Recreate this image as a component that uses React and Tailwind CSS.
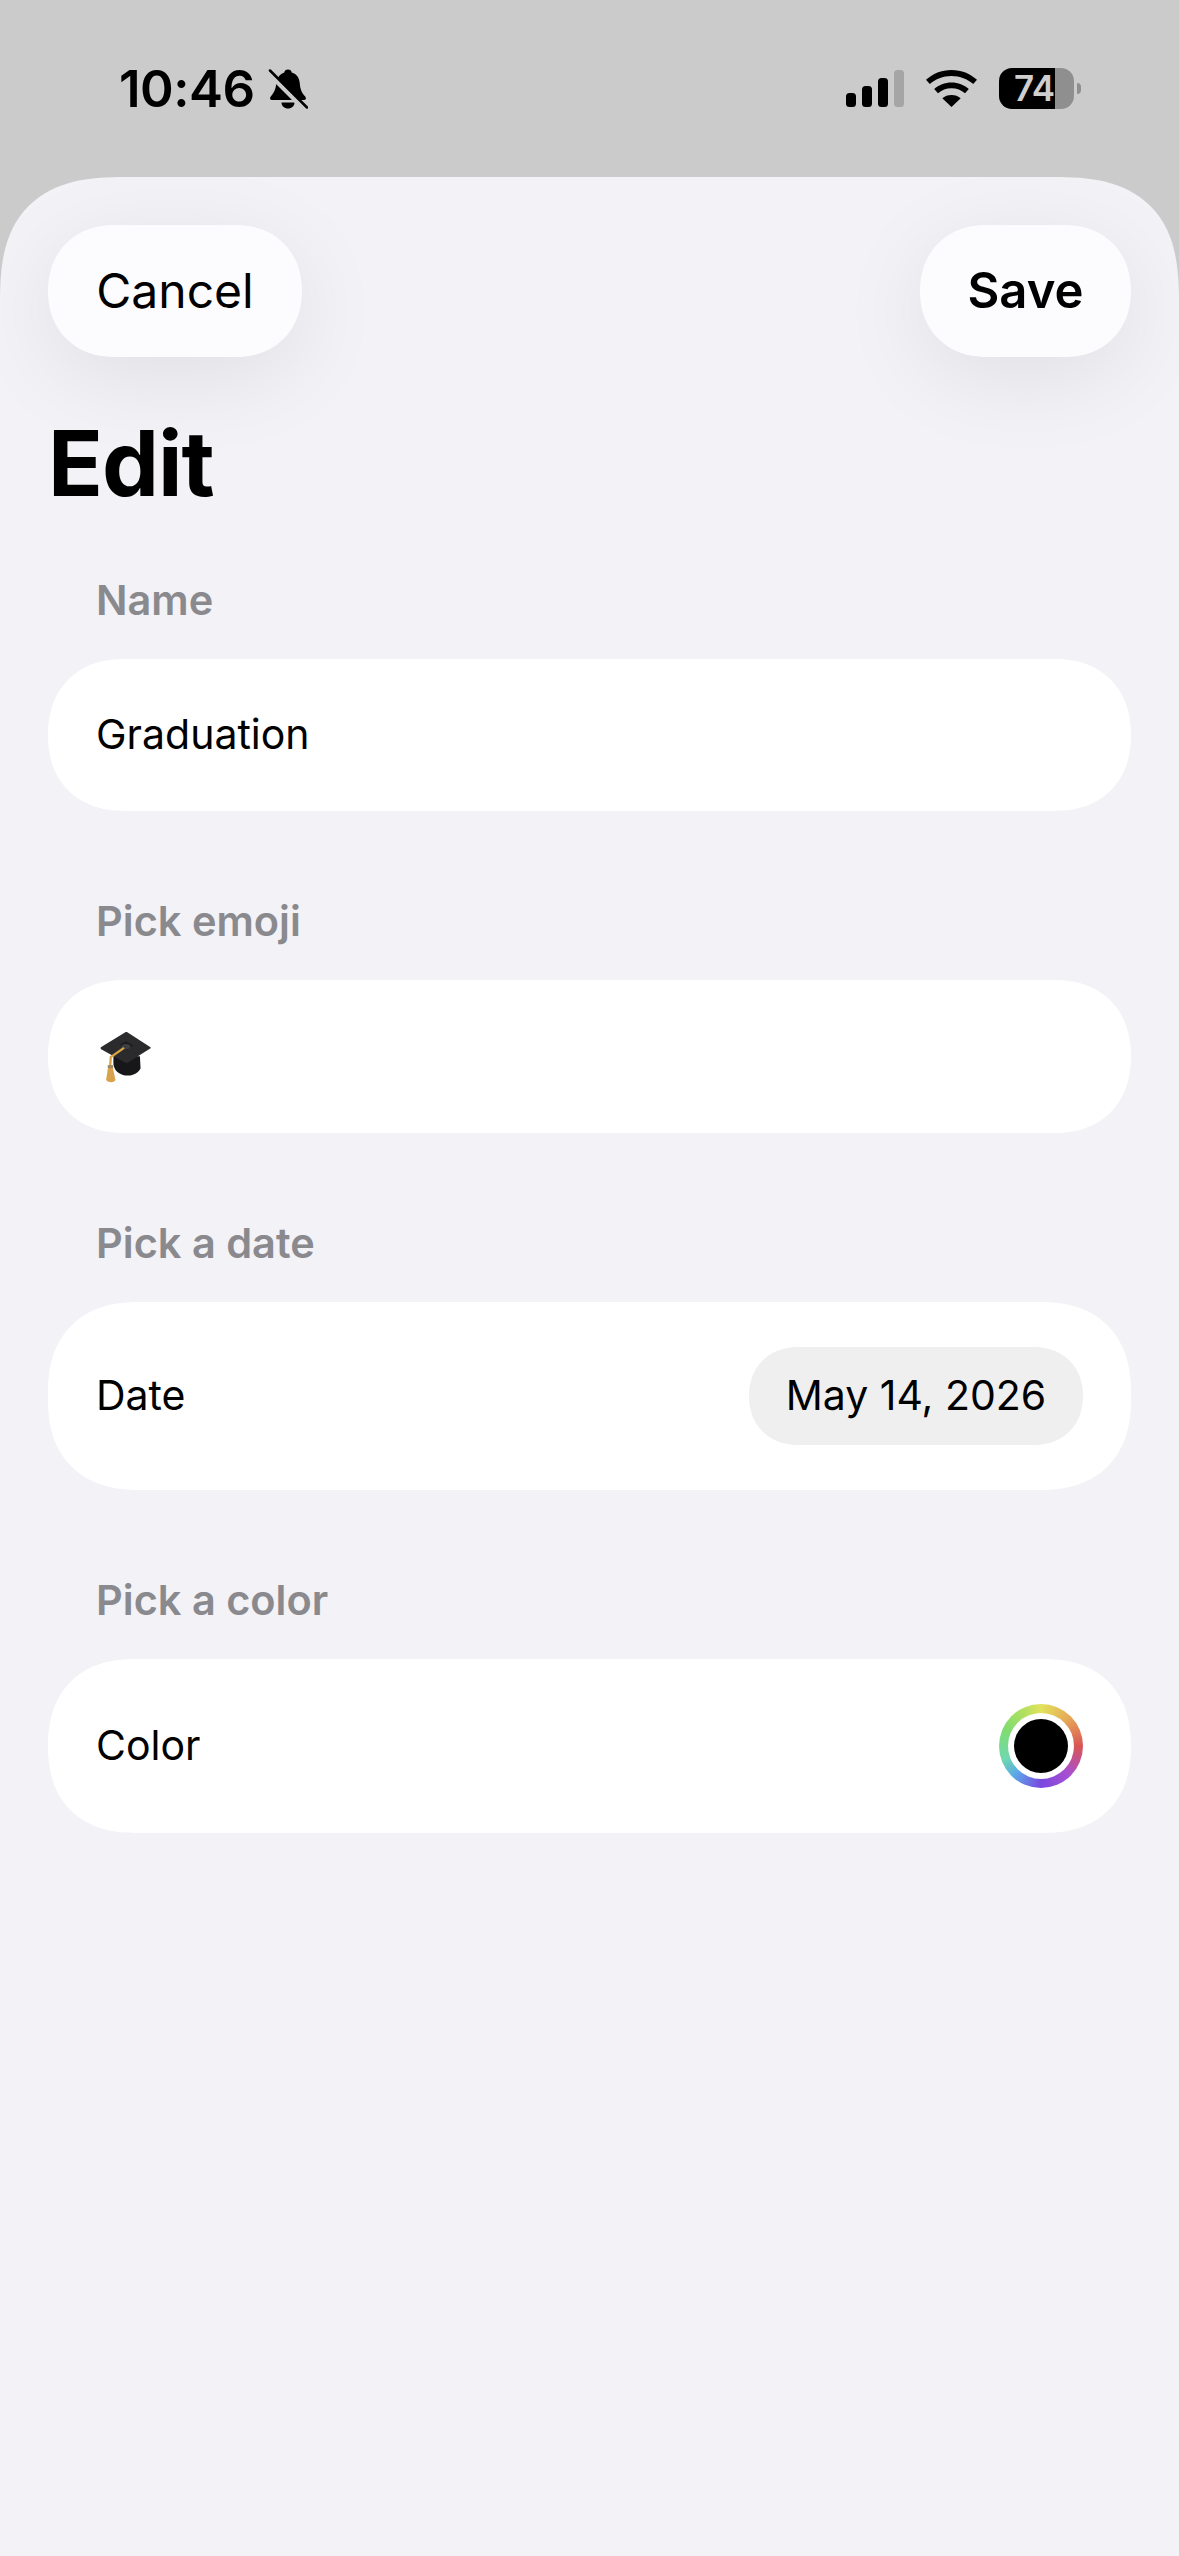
import React from 'react'

const font = "font-['Inter','Liberation_Sans',sans-serif]"

const MutedBell = () => (
  <svg width="40" height="40" viewBox="0 0 40 40">
    <path
      d="M20 0.500c2.200 0 3.400 1.300 3.700 2.900 5.200 1.400 7.700 5.800 8.100 11 .4 5.300 1.600 8.800 5.400 13 1.500 1.700.6 3.600-1.700 3.600H4.500c-2.300 0-3.200-1.900-1.700-3.600 3.500-3.900 4.700-7.300 5.400-12.200.8-5.600 3.200-10.400 8.100-11.800C16.600 1.800 17.800.500 20 .500z"
      fill="#000"
    />
    <path d="M13.500 33.500h13c0 3.500-2.800 6-6.500 6s-6.500-2.500-6.500-6z" fill="#000" />
    <path d="M0 3.500 36.500 40" stroke="#cbcbcb" strokeWidth="5" />
    <path d="M2 1.500 39 38.500" stroke="#000" strokeWidth="2.500" strokeLinecap="round" />
  </svg>
)

const Signal = () => (
  <svg width="58" height="37" viewBox="0 0 58 37">
    <rect x="0" y="23" width="10" height="14" rx="3.500" fill="#000" />
    <rect x="16" y="16" width="10" height="21" rx="3.500" fill="#000" />
    <rect x="32" y="8" width="10" height="29" rx="3.500" fill="#000" />
    <rect x="48" y="0" width="10" height="37" rx="3.500" fill="#a5a5a5" />
  </svg>
)

const Wifi = () => (
  <svg width="51" height="37" viewBox="0 0 51 37">
    <path d="M25.500 0C35.500 0 44.300 3.700 51 9.800l-3.800 4.300C41.500 9 34 6 25.500 6S9.500 9 3.800 14.100L0 9.800C6.700 3.700 15.500 0 25.500 0z" fill="#000" />
    <path d="M25.500 12.500c6.700 0 12.700 2.400 17.300 6.500l-3.800 4.300c-3.600-3.100-8.300-5-13.500-5s-9.900 1.900-13.500 5L8.200 19c4.600-4.100 10.600-6.500 17.300-6.500z" fill="#000" />
    <path d="M25.500 25c3.600 0 6.800 1.200 9.200 3.300L25.500 37l-9.200-8.700c2.400-2.100 5.600-3.300 9.200-3.300z" fill="#000" />
  </svg>
)

const Battery = () => (
  <div className="flex items-center gap-[3px]">
    <div className="w-[75px] h-[41px] rounded-[13px] flex items-center pl-[15px] bg-[linear-gradient(90deg,#000_56px,#8f8f8f_56px)]">
      <span className="text-[35px] leading-none font-semibold tracking-[-0.5px] text-[#cfcfcf]">74</span>
    </div>
    <div className="w-[4px] h-[11px] rounded-r-[4px] bg-[#8f8f8f]" />
  </div>
)

const GradCap = () => (
  <svg width="52" height="53" viewBox="0 -4 156 160">
    <path d="M40 75 L120 75 L122 112 C112 132 82 140 60 128 C48 122 42 112 40 100 Z" fill="#17171a" />
    <path d="M2 48 L76 3 C78 2 80 2 82 3 L152 48 C153 50 153 51 151 52 L84 94 C81 96 78 96 75 94 L3 54 C1 52 1 50 2 48 Z" fill="#2b2b2e" />
    <path d="M60 40 L78 30 L100 42 L80 56 Z" fill="#1d1d20" />
    <ellipse cx="78" cy="46" rx="13" ry="8" fill="#3e3e42" />
    <path d="M72 50 L32 78 L30 108" stroke="#d9a441" strokeWidth="7" fill="none" />
    <path d="M24 108 L38 108 L46 146 C46 156 20 156 18 146 Z" fill="#d9a24d" />
    <rect x="23" y="102" width="16" height="9" fill="#9a8a68" />
  </svg>
)

const Label = ({ children }) => (
  <div className="h-[50px] pl-[48px] text-[41.500px] leading-[50px] font-semibold text-[#8a8a8e]">{children}</div>
)

const FormSection = ({ title, children }) => (
  <section className="flex flex-col gap-[34px]">
    <Label>{title}</Label>
    {children}
  </section>
)

const ColorWell = () => (
  <div className="w-[84px] h-[84px] rounded-full flex items-center justify-center bg-[conic-gradient(#e2e35c,#e6a857_45deg,#d95555_90deg,#a94fd0_135deg,#7a48e0_180deg,#5aa8e8_222deg,#6fd8b0_250deg,#7fdc70_295deg,#b5e060_335deg,#e2e35c)]">
    <div className="w-[66px] h-[66px] rounded-full bg-white flex items-center justify-center">
      <div className="w-[54px] h-[54px] rounded-full bg-black" />
    </div>
  </div>
)

const App = () => {
  return (
    <div className={`${font} w-[1179px] h-[2556px] overflow-hidden bg-[#cbcbcb] text-black flex flex-col`}>
      <header className="h-[177px] shrink-0 flex items-center justify-between pl-[119px] pr-[98px]">
        <div className="flex items-center gap-[13px]">
          <span className="text-[51px] leading-none font-semibold tracking-[-0.5px]">10:46</span>
          <MutedBell />
        </div>
        <div className="flex items-center gap-[22px]">
          <Signal />
          <Wifi />
          <Battery />
        </div>
      </header>

      <main className="flex-1 overflow-hidden bg-[#f2f2f7] rounded-t-[125px] [corner-shape:superellipse(1.4)] px-[48px] pt-[48px]">
        <div className="flex justify-between">
          <button className="h-[132px] w-[254px] rounded-full [corner-shape:superellipse(1.1)] bg-[#fcfcfe] text-[48px] shadow-[0_20px_90px_rgba(0,0,0,0.08)]">
            Cancel
          </button>
          <button className="h-[132px] w-[211px] rounded-full [corner-shape:superellipse(1.1)] bg-[#fcfcfe] text-[49px] font-semibold shadow-[0_20px_90px_rgba(0,0,0,0.08)]">
            Save
          </button>
        </div>

        <h1 className="mt-[51px] mb-[57px] h-[110px] text-[90.500px] leading-[110px] font-bold tracking-[-1px]">Edit</h1>

        <div className="flex flex-col gap-[85px] text-[41px]">
          <FormSection title="Name">
            <div className="h-[152px] rounded-full [corner-shape:superellipse(1.15)] bg-white flex items-center pl-[48px]">Graduation</div>
          </FormSection>

          <FormSection title="Pick emoji">
            <div className="h-[153px] rounded-full [corner-shape:superellipse(1.15)] bg-white flex items-center pl-[52px]">
              <GradCap />
            </div>
          </FormSection>

          <FormSection title="Pick a date">
            <div className="h-[188px] rounded-[90px] [corner-shape:superellipse(1.2)] bg-white flex items-center justify-between pl-[48px] pr-[48px]">
              <span>Date</span>
              <span className="h-[98px] w-[334px] rounded-full [corner-shape:superellipse(1.1)] bg-[#efefef] flex items-center justify-center">May 14, 2026</span>
            </div>
          </FormSection>

          <FormSection title="Pick a color">
            <div className="h-[174px] rounded-[87px] [corner-shape:superellipse(1.2)] bg-white flex items-center justify-between pl-[48px] pr-[48px]">
              <span>Color</span>
              <ColorWell />
            </div>
          </FormSection>
        </div>
      </main>
    </div>
  )
}

export default App
